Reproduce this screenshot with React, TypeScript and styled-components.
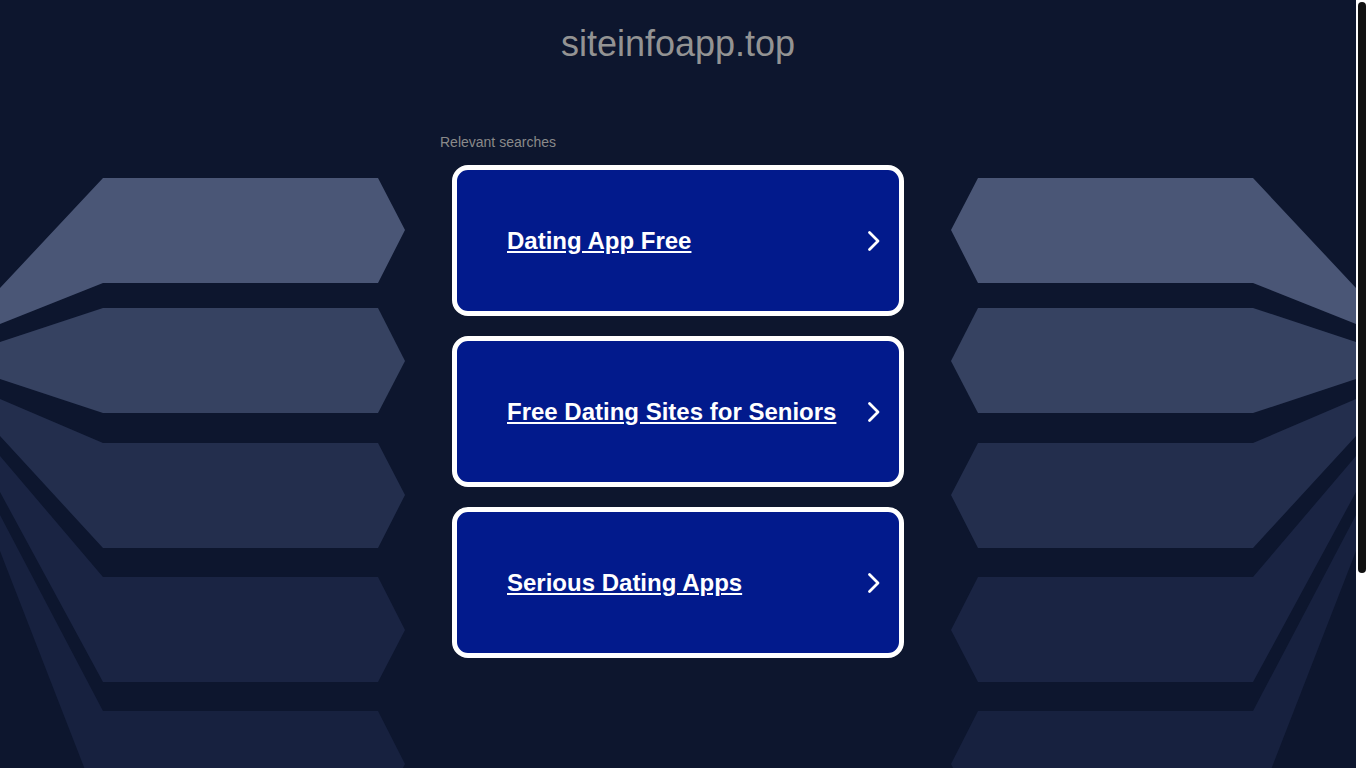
import React from "react";
import styled, { createGlobalStyle } from "styled-components";

const GlobalStyle = createGlobalStyle`
  html, body {
    margin: 0;
    padding: 0;
    background: #0d162e;
  }
  body {
    font-family: "Liberation Sans", Arial, sans-serif;
  }
  ::-webkit-scrollbar {
    width: 0;
    height: 0;
  }
  html {
    scrollbar-width: none;
  }
`;

const Page = styled.div`
  display: grid;
  grid-template-columns: 1fr 546px 1fr 10px;
  min-height: 1033px;
`;

const Art = styled.svg<{ $flip?: boolean }>`
  display: block;
  width: 100%;
  height: 830px;
  transform: ${(p) => (p.$flip ? "scaleX(-1)" : "none")};
`;

/* the browser's scroll rail seen on the right edge of the capture */
const Rail = styled.div`
  background: #ffffff;
  padding: 2px 0 0 2px;
`;

const Thumb = styled.div`
  height: 571px;
  background: #111111;
  border-radius: 4px;
`;

const Center = styled.main`
  display: flex;
  flex-direction: column;
  align-items: center;
`;

const Title = styled.h1`
  margin: 0;
  padding-top: 23px;
  font-size: 36px;
  line-height: 41px;
  font-weight: 400;
  color: #939393;
`;

const Searches = styled.section`
  width: 476px;
  margin-top: 70px;
  display: flex;
  flex-direction: column;
`;

const Caption = styled.p`
  margin: 0 0 15px;
  font-size: 14px;
  line-height: 16px;
  color: #8a8a8a;
`;

const List = styled.div`
  display: flex;
  flex-direction: column;
  gap: 20px;
  padding: 0 12px;
`;

const Card = styled.a`
  display: flex;
  align-items: center;
  justify-content: space-between;
  height: 141px;
  padding: 0 18px 0 50px;
  border: 5px solid #ffffff;
  border-radius: 16px;
  background: #021a8c;
  color: #ffffff;
  text-decoration: none;
  cursor: pointer;
`;

const CardText = styled.span`
  font-size: 24px;
  font-weight: 700;
  line-height: 28px;
  text-decoration: underline;
  text-underline-offset: 2px;
`;

const shapes = [
  {
    fill: "#4a5676",
    points: "0,288 103,178 378,178 405,230 378,283 103,283 0,324",
  },
  {
    fill: "#364261",
    points: "0,342 103,308 378,308 405,361 378,413 103,413 0,379",
  },
  {
    fill: "#232e4d",
    points: "0,399 103,443 378,443 405,495 378,548 103,548 0,436",
  },
  {
    fill: "#1a2443",
    points: "0,456 103,577 378,577 405,630 378,682 103,682 0,492",
  },
  {
    fill: "#17213f",
    points: "0,515 103,711 378,711 405,764 378,816 103,816 0,551",
  },
];

const SideArt = ({ flip }: { flip?: boolean }) => (
  <Art $flip={flip} viewBox="0 0 405 830" preserveAspectRatio="xMinYMin meet">
    {shapes.map((s, i) => (
      <polygon key={i} points={s.points} fill={s.fill} />
    ))}
  </Art>
);

const Chevron = () => (
  <svg width="14" height="24" viewBox="0 0 14 24" fill="none">
    <polyline
      points="2.5,3.5 11,12 2.5,20.5"
      stroke="#ffffff"
      strokeWidth="2.8"
      strokeLinecap="round"
      strokeLinejoin="round"
    />
  </svg>
);

const searches = [
  "Dating App Free",
  "Free Dating Sites for Seniors",
  "Serious Dating Apps",
];

const App = () => (
  <>
    <GlobalStyle />
    <Page>
      <SideArt />
      <Center>
        <Title>siteinfoapp.top</Title>
        <Searches>
          <Caption>Relevant searches</Caption>
          <List>
            {searches.map((s) => (
              <Card key={s}>
                <CardText>{s}</CardText>
                <Chevron />
              </Card>
            ))}
          </List>
        </Searches>
      </Center>
      <SideArt flip />
      <Rail>
        <Thumb />
      </Rail>
    </Page>
  </>
);

export default App;
